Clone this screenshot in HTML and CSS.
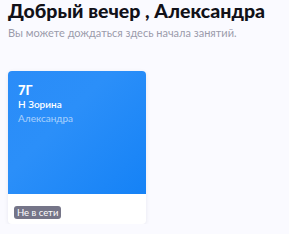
FILE: index.html
```html
<!DOCTYPE html>
<html lang="ru">
<head>
<meta charset="utf-8">
<link rel="stylesheet" href="styles.css">
</head>
<body>
<div class="page">
  <h1 class="title">Добрый вечер , Александра</h1>
  <p class="subtitle">Вы можете дождаться здесь начала занятий.</p>
  <div class="card">
    <div class="card-top">
      <div class="class-name">7Г</div>
      <div class="teacher">Н Зорина</div>
      <div class="student">Александра</div>
    </div>
    <div class="card-bottom">
      <span class="badge">Не в сети</span>
    </div>
  </div>
</div>
</body>
</html>
```
FILE: styles.css
```css
html, body {
  margin: 0;
  padding: 0;
  background: #fafaff;
}
.page {
  padding: 0 8px;
  font-family: Lato, "Noto Sans", sans-serif;
}
.title {
  margin: -1px 0 0;
  font-size: 19.5px;
  font-weight: 900;
  line-height: 24px;
  color: #111118;
  white-space: nowrap;
}
.subtitle {
  margin: 3px 0 0;
  font-size: 11px;
  line-height: 14px;
  color: #9b9bab;
  white-space: nowrap;
}
.card {
  margin-top: 31px;
  width: 138px;
  height: 153px;
  border-radius: 4px;
  background: #fff;
  box-shadow: 0 1px 4px rgba(20, 20, 60, 0.08);
  display: flex;
  flex-direction: column;
  overflow: hidden;
}
.card-top {
  flex: 0 0 123px;
  background: linear-gradient(135deg, #2a8cf8 0%, #2b8ff9 40%, #1582f6 100%);
  padding: 12px 10px 0;
  box-sizing: border-box;
  color: #fff;
}
.class-name {
  font-size: 13px;
  font-weight: 900;
  line-height: 15px;
}
.teacher {
  font-size: 10px;
  font-weight: 600;
  line-height: 13px;
}
.student {
  font-size: 10px;
  line-height: 12px;
  margin-top: 1px;
  color: rgba(255, 255, 255, 0.6);
}
.card-bottom {
  flex: 1;
  display: flex;
  align-items: flex-start;
  padding: 12px 6px 0;
}
.badge {
  background: #757588;
  color: #fff;
  font-size: 9.5px;
  line-height: 13px;
  padding: 0 3px;
  border-radius: 3px;
}
```
